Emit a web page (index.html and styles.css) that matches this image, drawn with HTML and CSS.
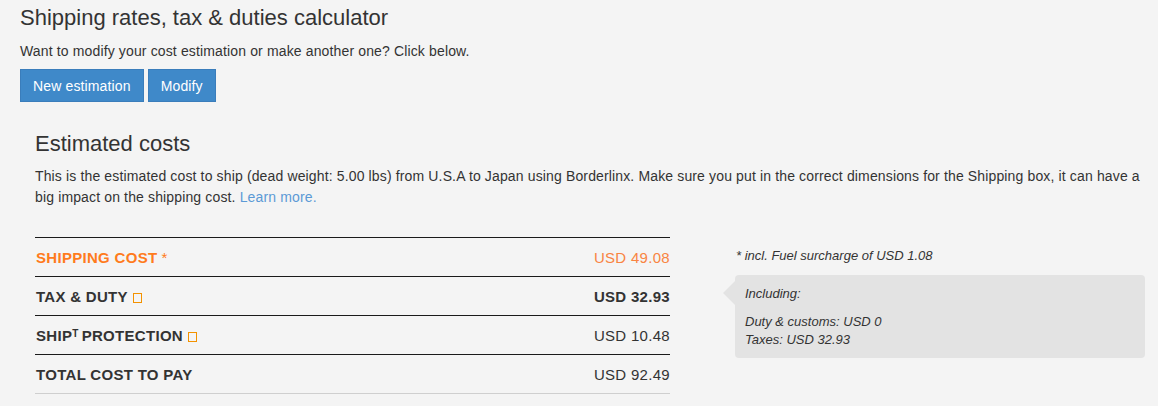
FILE: index.html
```html
<!DOCTYPE html>
<html>
<head>
<meta charset="utf-8">
<link rel="stylesheet" href="styles.css">
</head>
<body>
<div class="page">
  <h1 class="title">Shipping rates, tax &amp; duties calculator</h1>
  <p class="intro">Want to modify your cost estimation or make another one? Click below.</p>
  <div class="actions">
    <button class="btn">New estimation</button>
    <button class="btn">Modify</button>
  </div>
  <section class="estimate">
    <h2 class="subtitle">Estimated costs</h2>
    <p class="desc">This is the estimated cost to ship (dead weight: 5.00 lbs) from U.S.A to Japan using Borderlinx. Make sure you put in the correct dimensions for the Shipping box, it can have a big impact on the shipping cost. <a class="link" href="#">Learn more.</a></p>
    <div class="cols">
      <div class="costs">
        <div class="row row-ship">
          <span class="label">SHIPPING COST <span class="star">*</span></span>
          <span class="value">USD 49.08</span>
        </div>
        <div class="row">
          <span class="label">TAX &amp; DUTY <span class="tofu"></span></span>
          <span class="value value-bold">USD 32.93</span>
        </div>
        <div class="row">
          <span class="label">SHIP<sup class="sup">T</sup> PROTECTION <span class="tofu"></span></span>
          <span class="value">USD 10.48</span>
        </div>
        <div class="row row-last">
          <span class="label">TOTAL COST TO PAY</span>
          <span class="value">USD 92.49</span>
        </div>
      </div>
      <div class="notes">
        <p class="fuel">* incl. Fuel surcharge of USD 1.08</p>
        <div class="bubble">
          <p class="bubble-p">Including:</p>
          <p class="bubble-p">Duty &amp; customs: USD 0<br>Taxes: USD 32.93</p>
        </div>
      </div>
    </div>
  </section>
</div>
</body>
</html>
```
FILE: styles.css
```css
html, body {
  margin: 0;
  padding: 0;
  background: #f4f4f4;
}
body {
  font-family: "Liberation Sans", Arial, sans-serif;
  color: #333;
  font-size: 14px;
}
.page {
  padding: 4px 8px 0 20px;
}
.title {
  margin: 0;
  font-size: 22px;
  line-height: 28px;
  font-weight: normal;
  color: #333;
}
.intro {
  margin: 9px 0 0 0;
  font-size: 14px;
  line-height: 20px;
  letter-spacing: 0.14px;
  color: #333;
}
.actions {
  display: flex;
  gap: 4px;
  margin-top: 8px;
}
.btn {
  font-family: inherit;
  font-size: 14px;
  letter-spacing: 0.14px;
  color: #fff;
  background: #3f89c9;
  border: 1px solid #3a7dbb;
  border-radius: 0;
  height: 33px;
  padding: 0 12px;
  cursor: pointer;
}
.estimate {
  padding: 0 0 0 15px;
  margin-top: 28px;
}
.subtitle {
  margin: 0;
  font-size: 22px;
  line-height: 28px;
  font-weight: normal;
  color: #333;
}
.desc {
  margin: 8px 0 0 0;
  font-size: 14px;
  line-height: 21px;
  letter-spacing: 0.14px;
}
.link {
  color: #5b9ad6;
  text-decoration: none;
}
.cols {
  display: flex;
  gap: 65px;
  margin-top: 29px;
  align-items: flex-start;
}
.costs {
  width: 635px;
  flex: none;
}
.row {
  display: flex;
  justify-content: space-between;
  align-items: center;
  height: 38px;
  border-top: 1px solid #1a1a1a;
}
.row-last {
  border-bottom: 1px solid #cfcfcf;
}
.label {
  font-weight: bold;
  font-size: 15px;
  letter-spacing: 0.3px;
  padding-left: 1px;
  color: #333;
  display: flex;
  align-items: center;
}
.row-ship .label {
  color: #ff7b1c;
}
.row-ship .value {
  color: #f98442;
}
.star {
  font-weight: normal;
  margin-left: 4px;
}
.value {
  font-size: 15px;
  letter-spacing: 0.3px;
  color: #333;
}
.value-bold {
  font-weight: bold;
}
.sup {
  font-size: 10px;
  position: relative;
  top: -1px;
  vertical-align: super;
  line-height: 0;
  margin-right: 3px;
}
.tofu {
  display: inline-block;
  width: 7px;
  height: 8px;
  border: 1px solid #f39200;
  margin-left: 5px;
  margin-top: 4px;
}
.notes {
  width: 410px;
  flex: none;
  padding-top: 10px;
}
.fuel {
  margin: 0 0 0 1px;
  font-style: italic;
  font-size: 13px;
  line-height: 17px;
  color: #333;
}
.bubble {
  position: relative;
  background: #e3e3e3;
  border-radius: 4px;
  margin-top: 11px;
  padding: 10px 10px 9px 10px;
}
.bubble::before {
  content: "";
  position: absolute;
  left: -12px;
  top: 6px;
  border-top: 12px solid transparent;
  border-bottom: 12px solid transparent;
  border-right: 12px solid #e3e3e3;
}
.bubble-p {
  margin: 0;
  font-style: italic;
  font-size: 13px;
  line-height: 18px;
  color: #333;
}
.bubble-p + .bubble-p {
  margin-top: 10px;
}
```
